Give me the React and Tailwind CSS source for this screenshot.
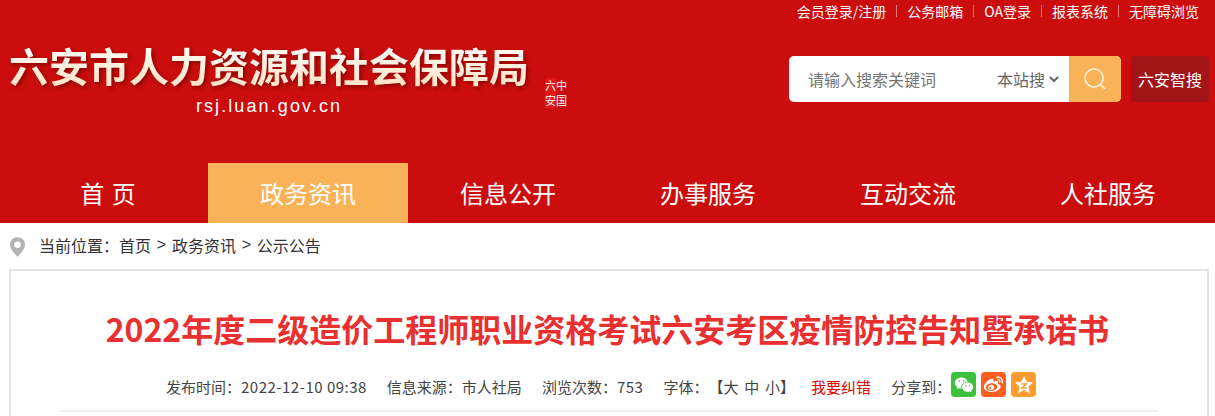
import { RiWechatFill, RiWeiboFill } from "react-icons/ri";

const topLinks = ["会员登录/注册", "公务邮箱", "OA登录", "报表系统", "无障碍浏览"];
const navItems = ["首 页", "政务资讯", "信息公开", "办事服务", "互动交流", "人社服务"];
const cjk = "font-['Noto_Sans_CJK_SC','Noto_Sans',sans-serif]";

function Header() {
  return (
    <header className="h-[163px] bg-[#cc0d0d] flex flex-col">
      <div className="h-[22px] flex justify-end items-center pr-[16px] text-[14px] leading-[22px] text-white">
        {topLinks.map((link, index) => (
          <span key={link} className="flex items-center">
            {index > 0 && <i className="w-px h-3 mx-[10px] bg-[#e77]" />}
            <span>{link}</span>
          </span>
        ))}
      </div>
      <div className="flex justify-between pl-[9px] pr-[6px]">
        <div className="flex items-start">
          <div className="flex flex-col items-center w-[520px]">
            <div className="mt-[18px] drop-shadow-[2px_2px_2px_rgba(90,0,0,0.6)]">
              <h1 className="text-[40px] leading-[50px] font-bold whitespace-nowrap bg-linear-to-b from-white to-[#ffe0c0] bg-clip-text text-transparent">
                六安市人力资源和社会保障局
              </h1>
            </div>
            <div className="text-[18px] leading-[24px] mt-[4px] tracking-[2.1px] text-white font-['Liberation_Sans',sans-serif]">
              rsj.luan.gov.cn
            </div>
          </div>
          <div className="ml-[16px] mt-[56px] w-[22px] h-[30px] flex flex-wrap flex-row-reverse text-[11px] leading-[15px] text-white">
            <span className="w-[11px] text-center">中</span>
            <span className="w-[11px] text-center bg-[#e01818]">六</span>
            <span className="w-[11px] text-center">国</span>
            <span className="w-[11px] text-center bg-[#e01818]">安</span>
          </div>
        </div>
        <div className="flex items-start mt-[34px]">
          <div className="w-[332px] h-[46px] bg-white rounded-[5px] overflow-hidden flex items-center">
            <span className="flex-1 pl-[19px] text-[16px] text-[#757575]">请输入搜索关键词</span>
            <span className="flex items-center text-[16px] text-[#666] mr-[10px]">
              本站搜
              <svg width="10" height="7" viewBox="0 0 10 7" className="ml-[4px]" fill="none" stroke="#666" strokeWidth="2">
                <path d="M1 1l4 4 4-4" />
              </svg>
            </span>
            <span className="w-[52px] h-full bg-[#f9b257] flex items-center justify-center">
              <svg width="24" height="24" viewBox="0 0 24 24" fill="none" stroke="#fff3e0" strokeWidth="1.6">
                <circle cx="11" cy="11" r="9" />
                <path d="M17.500 17.500l4.500 4.500" />
              </svg>
            </span>
          </div>
          <div className="ml-[10px] w-[78px] h-[46px] rounded-[4px] bg-[#a11519] text-white text-[16px] flex items-center justify-center">
            六安智搜
          </div>
        </div>
      </div>
    </header>
  );
}

function Nav() {
  return (
    <nav className="h-[60px] bg-[#cc0d0d] pl-[8px] flex">
      {navItems.map((item, index) => (
        <a
          key={item}
          className={
            index === 1
              ? "w-[200px] bg-[#f9b257] text-white text-[24px] leading-[60px] text-center"
              : "w-[200px] text-white text-[24px] leading-[60px] text-center [word-spacing:2px]"
          }
        >
          {item}
        </a>
      ))}
    </nav>
  );
}

function Breadcrumb() {
  return (
    <div className="h-[46px] pb-[2px] pl-[10px] flex items-center text-[16px] text-[#333]">
      <svg width="15" height="20" viewBox="0 0 16 21" className="mr-[14px] mt-[3px]">
        <path fillRule="evenodd" fill="#b3b3b3" d="M8 0a8 8 0 0 1 8 8c0 4.500-5 9.500-8 13-3-3.500-8-8.500-8-13a8 8 0 0 1 8-8zm0 4.500a3.500 3.500 0 1 0 0 7 3.500 3.500 0 0 0 0-7z" />
      </svg>
      <span>当前位置：</span>
      <span>首页</span>
      <span className="mx-[5.750px] font-['Liberation_Sans',sans-serif]">&gt;</span>
      <span>政务资讯</span>
      <span className="mx-[5.750px] font-['Liberation_Sans',sans-serif]">&gt;</span>
      <span>公示公告</span>
    </div>
  );
}

function ShareIcons() {
  return (
    <span className="flex gap-[5px]">
      <i className="w-[25px] h-[25px] rounded-[4px] bg-[#3cc13c] flex items-center justify-center text-white text-[20px]">
        <RiWechatFill />
      </i>
      <i className="w-[25px] h-[25px] rounded-[4px] bg-[#ff5f1f] flex items-center justify-center text-white text-[21px]">
        <RiWeiboFill />
      </i>
      <i className="w-[25px] h-[25px] rounded-[4px] bg-[#ff9c31] flex items-center justify-center">
        <svg width="20" height="20" viewBox="0 0 20 20">
          <path fill="#fff" d="M10 1l2.700 5.700 6.300.800-4.600 4.300 1.200 6.200L10 15l-5.600 3 1.200-6.200L1 7.500l6.300-.800z" />
          <path fill="none" stroke="#ff9c31" strokeWidth="1.300" d="M7.500 9h5l-5 4h5" />
        </svg>
      </i>
    </span>
  );
}

function Article() {
  return (
    <section className="ml-[9px] mr-[6px] h-[147px] border-2 border-b-0 border-[#e4e4e4] bg-white px-[49px]">
      <h2 className="pt-[34px] pr-[3px] text-[32px] leading-[46px] font-bold text-center text-[#e93030] whitespace-nowrap">
        2022年度二级造价工程师职业资格考试六安考区疫情防控告知暨承诺书
      </h2>
      <div className="mt-[21px] h-[40px] pb-[10px] pl-[106px] border-b-2 border-[#efefef] flex items-start text-[15px] leading-[30px] text-[#444] whitespace-nowrap [text-spacing-trim:space-all]">
        <span>
          发布时间：<span className="tracking-[0.5px]">2022-12-10 09:38</span>
        </span>
        <span className="ml-[20px]">信息来源：市人社局</span>
        <span className="ml-[20px]">
          浏览次数：<span className="tracking-[0.5px]">753</span>
        </span>
        <span className="ml-[20px] [word-spacing:2.500px]">字体：【大 中 小】</span>
        <span className="ml-[16px] text-[#e00000]">我要纠错</span>
        <span className="ml-[20px]">分享到：</span>
        <ShareIcons />
      </div>
    </section>
  );
}

export default function App() {
  return (
    <div className={`w-[1215px] h-[416px] overflow-hidden bg-white ${cjk}`}>
      <Header />
      <Nav />
      <Breadcrumb />
      <Article />
    </div>
  );
}
